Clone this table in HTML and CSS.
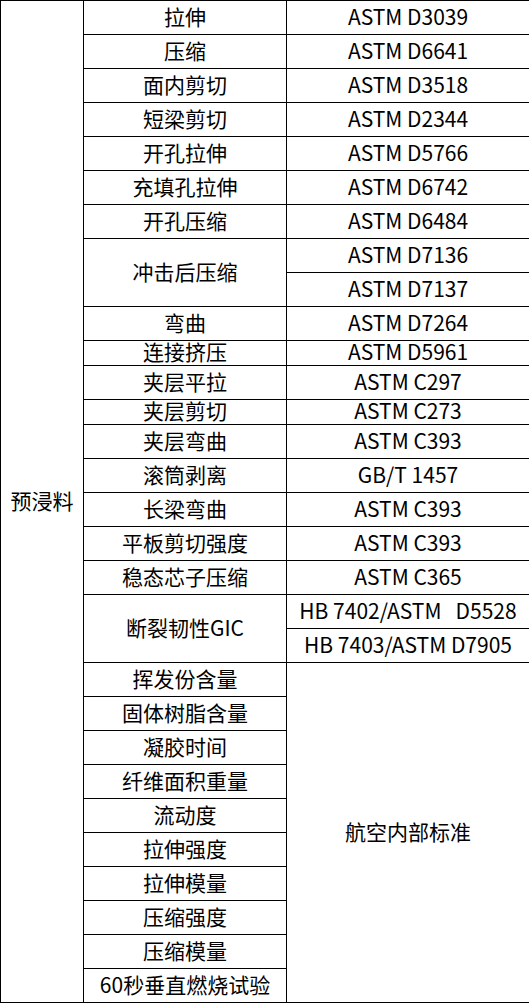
FILE: index.html
```html
<!DOCTYPE html>
<html lang="zh-CN">
<head>
<meta charset="utf-8">
<link rel="stylesheet" href="styles.css">
</head>
<body>
<table class="spec">
<colgroup><col class="c1"><col class="c2"><col class="c3"></colgroup>
<tbody>
<tr class="r"><td rowspan="30">预浸料</td><td>拉伸</td><td>ASTM D3039</td></tr>
<tr class="r"><td>压缩</td><td>ASTM D6641</td></tr>
<tr class="r"><td>面内剪切</td><td>ASTM D3518</td></tr>
<tr class="r"><td>短梁剪切</td><td>ASTM D2344</td></tr>
<tr class="r"><td>开孔拉伸</td><td>ASTM D5766</td></tr>
<tr class="r"><td>充填孔拉伸</td><td>ASTM D6742</td></tr>
<tr class="r"><td>开孔压缩</td><td>ASTM D6484</td></tr>
<tr class="r"><td rowspan="2">冲击后压缩</td><td>ASTM D7136</td></tr>
<tr class="r"><td>ASTM D7137</td></tr>
<tr class="r"><td>弯曲</td><td>ASTM D7264</td></tr>
<tr class="s"><td>连接挤压</td><td>ASTM D5961</td></tr>
<tr class="r"><td>夹层平拉</td><td>ASTM C297</td></tr>
<tr class="s"><td>夹层剪切</td><td>ASTM C273</td></tr>
<tr class="r"><td>夹层弯曲</td><td>ASTM C393</td></tr>
<tr class="r"><td>滚筒剥离</td><td>GB/T 1457</td></tr>
<tr class="r"><td>长梁弯曲</td><td>ASTM C393</td></tr>
<tr class="r"><td>平板剪切强度</td><td>ASTM C393</td></tr>
<tr class="r"><td>稳态芯子压缩</td><td>ASTM C365</td></tr>
<tr class="r"><td rowspan="2">断裂韧性GIC</td><td class="pre">HB 7402/ASTM   D5528</td></tr>
<tr class="r"><td>HB 7403/ASTM D7905</td></tr>
<tr class="r"><td>挥发份含量</td><td rowspan="10">航空内部标准</td></tr>
<tr class="r"><td>固体树脂含量</td></tr>
<tr class="r"><td>凝胶时间</td></tr>
<tr class="r"><td>纤维面积重量</td></tr>
<tr class="r"><td>流动度</td></tr>
<tr class="r"><td>拉伸强度</td></tr>
<tr class="r"><td>拉伸模量</td></tr>
<tr class="r"><td>压缩强度</td></tr>
<tr class="r"><td>压缩模量</td></tr>
<tr class="r"><td>60秒垂直燃烧试验</td></tr>
</tbody>
</table>
</body>
</html>
```
FILE: styles.css
```css
html, body {
  margin: 0;
  padding: 0;
  background: #fff;
}
.spec {
  border-collapse: collapse;
  table-layout: fixed;
  width: 529px;
  font-family: "Noto Sans CJK SC", "Noto Sans", sans-serif;
  font-size: 21px;
  color: #000;
}
.c1 { width: 83px; }
.c2 { width: 203px; }
.c3 { width: 243px; }
.spec td {
  border: 1px solid #000;
  padding: 0 0 4px 0;
  text-align: center;
  vertical-align: middle;
  white-space: nowrap;
  line-height: 20px;
}
.r { height: 34px; }
.s { height: 25px; }
.spec td.pre { white-space: pre; }
```
